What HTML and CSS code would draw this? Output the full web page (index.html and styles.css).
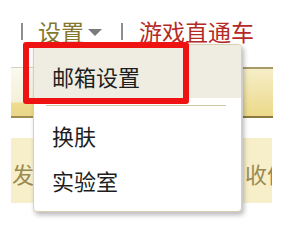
FILE: index.html
```html
<!DOCTYPE html>
<html lang="zh-CN">
<head>
  <meta charset="UTF-8">
  <meta name="viewport" content="width=device-width, initial-scale=1.0">
  <title>设置菜单</title>
  <link rel="stylesheet" href="styles.css">
</head>
<body>
  <div class="page">
    <div class="nav">
      <span class="sep"></span>
      <span class="nav-set">设置</span>
      <span class="caret"></span>
      <span class="sep sep-2"></span>
      <span class="nav-game">游戏直通车</span>
    </div>

    <div class="tabs">
      <div class="tab tab-left"></div>
      <div class="tab tab-right"></div>
    </div>

    <div class="tools">
      <div class="tool tool-left">发</div>
      <div class="tool tool-right">收信</div>
    </div>

    <div class="menu">
      <div class="menu-item menu-first">邮箱设置</div>
      <div class="menu-line"></div>
      <div class="menu-item">换肤</div>
      <div class="menu-item">实验室</div>
    </div>

    <div class="mark"></div>
  </div>
</body>
</html>
```

FILE: styles.css
```css
* {
  box-sizing: border-box;
}
body {
  margin: 0;
  background-color: #fff;
  font-family: "Noto Sans CJK SC", "Noto Sans", sans-serif;
}
.page {
  position: relative;
  width: 300px;
  height: 242px;
  overflow: hidden;
}
.nav {
  display: flex;
  align-items: center;
  height: 24px;
  margin-top: 19px;
  padding-left: 21px;
  font-size: 23px;
  line-height: 24px;
}
.sep {
  width: 2px;
  height: 17px;
  background-color: #8e8e8e;
}
.nav-set {
  margin-left: 15px;
  color: #86772e;
}
.caret {
  margin-left: 4px;
  margin-top: 2px;
  border-left: 7px solid transparent;
  border-right: 7px solid transparent;
  border-top: 7px solid #7a7a7a;
}
.sep-2 {
  margin-left: 19px;
}
.nav-game {
  margin-left: 16px;
  color: #b52a26;
}
.tabs {
  display: flex;
  gap: 2px;
  margin-top: 24px;
  padding-left: 11px;
  height: 51px;
}
.tab {
  height: 100%;
}
.tab-left {
  width: 230px;
  border-top: 1px solid #d6d1bd;
  border-bottom: 2px solid #9e8b4e;
  background: linear-gradient(#fbf9ef 0%, #f5f0d8 70%, #eedd8f 74%, #ead58a 100%);
}
.tab-right {
  width: 30px;
  border-top: 2px solid #a89a68;
  border-bottom: 2px solid #8a7a40;
  background: linear-gradient(#f6eec8, #ecd98a);
}
.tools {
  display: flex;
  gap: 2px;
  margin-top: 20px;
  padding-left: 11px;
  height: 65px;
}
.tool {
  display: flex;
  align-items: center;
  overflow: hidden;
  white-space: nowrap;
  background-color: #f7efc9;
  color: #998a52;
  font-size: 22px;
  padding-top: 4px;
}
.tool-left {
  width: 230px;
  padding-left: 1px;
}
.tool-right {
  width: 29px;
  padding-left: 2px;
}
.menu {
  position: absolute;
  left: 33px;
  top: 44px;
  width: 209px;
  height: 168px;
  background-color: #fff;
  border: 1px solid #d8d1b4;
  border-radius: 4px;
  box-shadow: 2px 3px 5px rgba(0, 0, 0, 0.28);
  overflow: hidden;
}
.menu-item {
  height: 45px;
  line-height: 45px;
  padding-left: 18px;
  font-size: 22px;
  color: #1e1e1e;
}
.menu-first {
  height: 53px;
  line-height: 44px;
  padding-top: 9px;
  background-color: #efede2;
}
.menu-line {
  height: 1px;
  margin: 7px 15px 7px 12px;
  background-color: #cfc8a8;
}
.mark {
  position: absolute;
  left: 23px;
  top: 42px;
  width: 166px;
  height: 62px;
  border: 6px solid #ee1212;
  border-radius: 3px;
}
```
